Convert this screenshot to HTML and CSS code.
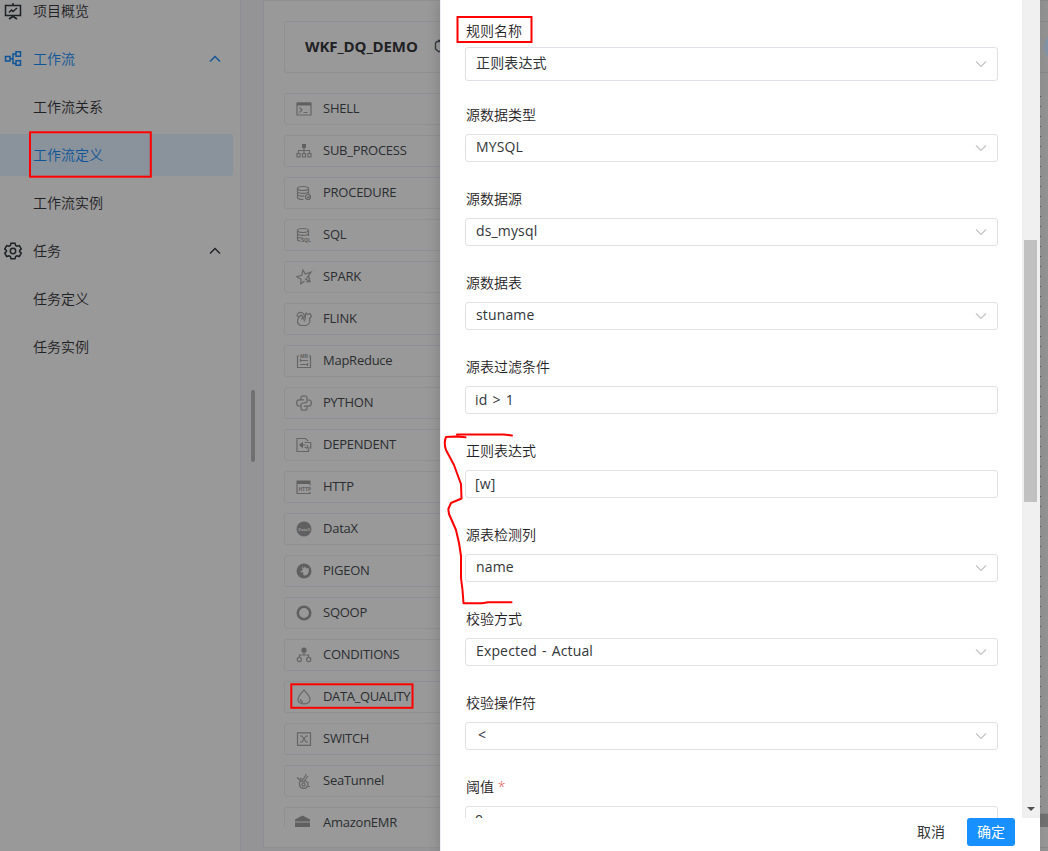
FILE: index.html
```html
<!DOCTYPE html>
<html lang="zh-CN">
<head>
<meta charset="utf-8">
<title>WKF_DQ_DEMO</title>
<link rel="stylesheet" href="styles.css">
</head>
<body>
<div class="app">
  <nav class="sidebar">
    <div class="menu-item">
      <svg class="menu-icon" viewBox="0 0 18 18"><path d="M1.500 3.500h15v10h-15zM9 1v2.500M9 13.500v2M5 17l4-2.500 4 2.500M5 10.500l2.500-2.500 1.500 1.500 4-3.500"/></svg>
      <span>项目概览</span>
    </div>
    <div class="menu-item active">
      <svg class="menu-icon" viewBox="0 0 18 18"><path d="M1.500 6.500h4.500v4.500H1.500zM6 8.800h3M12 4H9v9.500h3M12 1.800h4.500v4.500H12zM12 10.800h4.500v4.500H12z"/></svg>
      <span>工作流</span>
      <svg class="caret" viewBox="0 0 12 12"><path d="M1 8.500l5-5 5 5"/></svg>
    </div>
    <div class="menu-item child">工作流关系</div>
    <div class="menu-item child active selected">工作流定义</div>
    <div class="menu-item child">工作流实例</div>
    <div class="menu-item">
      <svg class="menu-icon" viewBox="0 0 18 18"><path d="M7 1.200h4l.6 2.300 1.400.8 2.300-.7 2 3.400-1.700 1.300v1.400l1.700 1.400-2 3.400-2.300-.7-1.400.8-.6 2.200H7l-.6-2.200-1.400-.8-2.300.7-2-3.400 1.700-1.400V8.300L.7 7l2-3.400 2.300.7 1.400-.8z"/><circle cx="9" cy="9" r="2.700"/></svg>
      <span>任务</span>
      <svg class="caret" viewBox="0 0 12 12"><path d="M1 8.500l5-5 5 5"/></svg>
    </div>
    <div class="menu-item child">任务定义</div>
    <div class="menu-item child">任务实例</div>
  </nav>
  <div class="gutter"><div class="grip"></div></div>
  <main class="panel">
    <header class="title-card"><h1>WKF_DQ_DEMO</h1>
      <svg class="copy-icon" viewBox="0 0 14 14"><path d="M4 1.500h8.500v9M3 2.500h6.500v10h-5L1.500 10V4z"/></svg>
    </header>
    <div class="task-list">
      <div class="task"><svg viewBox="0 0 16 16"><path d="M1 2h14v12H1zM3.500 6.500L6 9l-2.500 2.500M7.500 11.500h4"/><path class="solid" d="M1 1.500h14v3H1z"/></svg><span>SHELL</span></div>
      <div class="task"><svg viewBox="0 0 16 16"><path class="solid" d="M6 1h4v4H6z"/><path d="M8 5v5M2.500 10V7.500h11V10M1 10.500h3v3.500H1zM6.500 10.500h3v3.500h-3zM12 10.500h3v3.500h-3z"/></svg><span>SUB_PROCESS</span></div>
      <div class="task"><svg viewBox="0 0 16 16"><ellipse cx="7" cy="3.500" rx="5.500" ry="2"/><path d="M1.500 3.500v9c0 1.200 3 2 6 2M12.500 3.500V9M1.500 6.500c0 2.500 11 2.500 11 0M1.500 9.500c0 1.500 4 2 7 1.500"/><circle cx="12" cy="12" r="2.500"/><path d="M11 12l1 1 2-2"/></svg><span>PROCEDURE</span></div>
      <div class="task"><svg viewBox="0 0 16 16"><ellipse cx="7" cy="3.500" rx="5.500" ry="2"/><path d="M1.500 3.500v9c0 1 1 1.500 3 1.500M12.500 3.500V9M1.500 6.500c0 2.500 11 2.500 11 0M1.500 9.500c0 1 2 1.500 5 1.500"/><text x="5.200" y="14.500">SQL</text></svg><span>SQL</span></div>
      <div class="task"><svg viewBox="0 0 16 16"><path d="M10.500 9.500L15 3.200 9.300 5 7 1 5.800 6.200.8 7.700 5 10.300 4.800 14.800 8.500 12M12.500 6.500L14 12.500 9 9.800M10 12.800l4-.3"/></svg><span>SPARK</span></div>
      <div class="task"><svg viewBox="0 0 16 16"><path d="M5.500 8.500c1.500-2 1-4-.5-4.500L3 6 1 5C1 2.500 3 1 5.500 1.500 8.500 2 9 5 7 8.500M3 6.500C.5 9 1 13.500 5 14.500h5c3-1 4.500-4 3.500-7l2-2-1.500-3-2.500 1-1.500-1.500C8.500 4 10.500 7 8 10.500"/></svg><span>FLINK</span></div>
      <div class="task"><svg viewBox="0 0 16 16"><path d="M3 3H1.500v11.500h13V3H13M4 7.500h8M4 11.500h8M4.500 6v3M11.500 10v3"/><text x="4" y="5">MR</text></svg><span>MapReduce</span></div>
      <div class="task"><svg viewBox="0 0 16 16"><path d="M8 4.800H3C-.2 5-.2 11 3 11h2V9.500C5 7 11 9 11 6.500V2.500C11 .2 5 .2 5 2.500v2.300M8 11.200h5c3.200-.2 3.200-6.200 0-6.200h-2M5 10v3.500c0 2.300 6 2.300 6 0v-2.300"/></svg><span>PYTHON</span></div>
      <div class="task"><svg viewBox="0 0 16 16"><path d="M12 4L9.500 1.500H1v13h11.500V12M6 8h4M8.500 5.500h6.200v5.500H10M8.500 10.500h3V8"/><path class="solid" d="M3 8l4-3.200v6.400z"/></svg><span>DEPENDENT</span></div>
      <div class="task"><svg viewBox="0 0 16 16"><path class="solid" d="M.5 1.500h14v3.500H.5z"/><path d="M1 5v9.500h13V13M14 5v1.500"/><text x="2.500" y="11.500">HTTP</text></svg><span>HTTP</span></div>
      <div class="task"><svg viewBox="0 0 16 16"><circle class="solid" cx="8" cy="8" r="7.500"/><text class="knockout" x="2.200" y="9.600">DataX</text></svg><span>DataX</span></div>
      <div class="task"><svg viewBox="0 0 16 16"><circle class="solid" cx="8" cy="8" r="7.500"/><path class="cutout" d="M6 2.500l1.500 3 1.500-2 1.500 2 2-.5c1 4-.5 7-3.500 7.500-2 0-2-1.500-1.500-3L3.500 9l3-1.500z"/></svg><span>PIGEON</span></div>
      <div class="task"><svg viewBox="0 0 16 16"><circle class="ring" cx="8" cy="8" r="6.200"/></svg><span>SQOOP</span></div>
      <div class="task"><svg viewBox="0 0 16 16"><circle class="solid" cx="8" cy="3.200" r="2.600"/><path d="M8 5.500V8M3.500 10.500V8h9v2.500"/><circle cx="3.300" cy="12.500" r="2.100"/><circle cx="12.700" cy="12.500" r="2.100"/></svg><span>CONDITIONS</span></div>
      <div class="task quality"><svg viewBox="0 0 16 16"><path d="M8 1C6 3.500 2 7 2 10.200c0 6.300 12 6.300 12 0C14 7 10 3.500 8 1zM4.500 10c0 2 1 3 2.500 3.200"/></svg><span>DATA_QUALITY</span></div>
      <div class="task"><svg viewBox="0 0 16 16"><path d="M1.500 1.800h13v12.500h-13zM4 5h2l4 6h2M4 11h2l4-6h2"/></svg><span>SWITCH</span></div>
      <div class="task"><svg viewBox="0 0 16 16"><path d="M3.500 9C2 17.500 13 17.500 12 9.500L9.500 8 5 8.500zM1 4.500l4 3.500M4 5l3 2.500M10.500 1L7 6.500M12 3L8.500 7.500M12 13.500h2"/><circle cx="7.500" cy="11.500" r="1.600"/></svg><span>SeaTunnel</span></div>
      <div class="task"><svg viewBox="0 0 16 16"><path class="solid" d="M-1 4.500L6.500.5 14 4.500v2H-1zM-1 7.500h15v6.500H-1z"/></svg><span>AmazonEMR</span></div>
    </div>
  </main>
</div>

<div class="backdrop-edge">
  <div class="edge-head"><div class="edge-toolbar"><div class="edge-button"></div></div></div>
  <div class="edge-canvas"></div>
  <div class="edge-scroll"></div>
  <div class="edge-foot"></div>
</div>

<section class="drawer">
  <div class="drawer-body">
    <form class="fields">
      <div class="field tall"><label>规则名称</label><div class="control select">正则表达式<svg viewBox="0 0 12 12"><path d="M1 3.500l5 5 5-5"/></svg></div></div>
      <div class="field"><label>源数据类型</label><div class="control select">MYSQL<svg viewBox="0 0 12 12"><path d="M1 3.500l5 5 5-5"/></svg></div></div>
      <div class="field"><label>源数据源</label><div class="control select">ds_mysql<svg viewBox="0 0 12 12"><path d="M1 3.500l5 5 5-5"/></svg></div></div>
      <div class="field"><label>源数据表</label><div class="control select">stuname<svg viewBox="0 0 12 12"><path d="M1 3.500l5 5 5-5"/></svg></div></div>
      <div class="field"><label>源表过滤条件</label><div class="control">id &gt; 1</div></div>
      <div class="field"><label>正则表达式</label><div class="control">[w]</div></div>
      <div class="field"><label>源表检测列</label><div class="control select">name<svg viewBox="0 0 12 12"><path d="M1 3.500l5 5 5-5"/></svg></div></div>
      <div class="field"><label>校验方式</label><div class="control select">Expected - Actual<svg viewBox="0 0 12 12"><path d="M1 3.500l5 5 5-5"/></svg></div></div>
      <div class="field"><label>校验操作符</label><div class="control select operator">&lt;<svg viewBox="0 0 12 12"><path d="M1 3.500l5 5 5-5"/></svg></div></div>
      <div class="field"><label>阈值 <span class="required">*</span></label><div class="control">0</div></div>
    </form>
    <div class="scrollbar"><div class="thumb"></div><div class="arrow"></div></div>
  </div>
  <footer class="actions"><button class="cancel">取消</button><button class="confirm">确定</button></footer>
</section>

<svg class="marks" viewBox="0 0 1048 851">
  <rect x="30" y="132.300" width="120.800" height="44.400"/>
  <rect x="457.500" y="17" width="74" height="25"/>
  <rect x="291.300" y="684.300" width="121.200" height="23.500"/>
  <path d="M512 435.500L504 434.500H457M465.500 437.300L456 436.500 446 437Q443.500 443 446 450L454 465 458 476 461 484 461.500 498.500 451 503 448.300 509 449 514 456 530 459 543 461 556V578L462.500 590 463.500 603.300H482L488 602.300H511.500"/>
</svg>
</body>
</html>
```
FILE: styles.css
```css
* { box-sizing: border-box; }
body {
  position: relative;
  width: 1048px;
  height: 851px;
  margin: 0;
  overflow: hidden;
  background: #949497;
  font: 14px/22px "Open Sans", "Noto Sans CJK SC", sans-serif;
}
.app { display: flex; height: 851px; }

/* Side menu */
.sidebar {
  width: 241px;
  flex: none;
  padding-top: 0;
  margin-top: -10px;
  background: #999;
  border-right: 1px solid #8f8f93;
  color: #1f2225;
}
.menu-item {
  display: flex;
  align-items: center;
  width: 233px;
  height: 42px;
  margin-bottom: 6px;
  padding: 0 12px 0 4px;
  border-radius: 0 3px 3px 0;
  font-weight: 350;
}
.menu-icon { width: 18px; height: 18px; margin-right: 11px; fill: none; stroke: currentColor; stroke-width: 1.5; }
.caret { width: 12px; height: 12px; margin-left: auto; fill: none; stroke: currentColor; stroke-width: 1.4; }
.menu-item.child { padding-left: 33px; }
.menu-item.active { color: #0f5599; }
.menu-item.selected { background: #8a929b; }

/* Divider with its drag handle */
.gutter { width: 22px; flex: none; padding: 390px 0 0 10px; }
.grip { width: 4px; height: 72px; border-radius: 2px; background: #707070; }

/* Workflow panel */
.panel {
  flex: 1;
  height: 848px;
  padding: 20px;
  border: 1px solid #8f8f93;
  background: #999;
}
.title-card {
  display: flex;
  align-items: center;
  height: 52px;
  padding: 0 0 2px 20px;
  border: 1px solid #8f8f93;
  border-radius: 3px;
  color: #1f2225;
}
.title-card h1 { width: 129px; margin: 0; font-size: 15px; line-height: 22px; font-weight: 700; letter-spacing: -.08px; }
.copy-icon { width: 14px; height: 14px; fill: none; stroke: #333639; stroke-width: 1.300; }
.task-list { height: 734px; margin-top: 20px; overflow: hidden; }
.task {
  display: flex;
  align-items: center;
  height: 32px;
  margin-bottom: 10px;
  padding-left: 11px;
  border: 1px solid #8f8f93;
  border-radius: 3px;
  color: #2b2e31;
  font-size: 13px;
  letter-spacing: -.25px;
}
.task.quality { letter-spacing: -.35px; }
.task span { padding-bottom: 2px; line-height: 18px; }
.task svg { width: 16px; height: 16px; margin-right: 11px; overflow: visible; fill: none; stroke: #666; stroke-width: 1.200; }
.task svg text { fill: #606060; stroke: none; font: 700 5px "Open Sans", sans-serif; letter-spacing: 0; }
.task svg .solid { fill: #606060; stroke: none; }
.task svg .cutout { fill: #999; stroke: none; }
.task svg .knockout { fill: #999; font-size: 4px; }
.task svg .ring { stroke: #606060; stroke-width: 2.600; }

/* Strip of the dimmed page to the right of the drawer */
.backdrop-edge { position: absolute; top: 0; left: 1040px; width: 8px; height: 851px; background: #929292; overflow: hidden; }
.edge-head { height: 91px; padding-top: 20px; border-top: 1px solid #88888b; }
.edge-toolbar { height: 52px; padding: 9px 0 0 4px; border-top: 1px solid #88888b; border-bottom: 1px solid #88888b; }
.edge-button { width: 32px; height: 32px; border-radius: 50%; background: #8292a5; }
.edge-canvas { height: 722px; background: radial-gradient(circle at 0.500px 5.500px, #555 .6px, transparent .9px) 0 0 / 10px 10px; }
.edge-scroll { height: 14px; border-top: 1px solid #888; background: #707070; }
.edge-foot { height: 21px; border-bottom: 1px solid #88888b; background: #969696; }

/* Drawer */
.drawer {
  position: absolute;
  top: 0;
  left: 440px;
  width: 600px;
  height: 851px;
  background: #fff;
  border-left: 1px solid #efeff5;
  box-shadow: -3px 0 10px rgba(0, 0, 0, .12);
}
.drawer-body { display: flex; height: 818px; overflow: hidden; }
.fields { width: 581px; padding: 18px 24px 0; color: #333639; }
.field { height: 84px; }
.field label { display: block; height: 32px; padding-left: 1px; line-height: 26px; color: #1f2225; font-weight: 350; }
.control {
  display: flex;
  align-items: center;
  width: 533px;
  height: 28px;
  padding: 0 10px 0 9px;
  border: 1px solid #e0e0e6;
  border-radius: 3px;
  letter-spacing: .15px;
  word-spacing: 1.300px;
}
.control.select { padding: 0 10px 2px; }
.control.operator { padding-left: 12px; }
.control svg { width: 12px; height: 12px; margin: 2px 0 0 auto; fill: none; stroke: #c2c2c2; stroke-width: 1.100; }
.tall label { height: 29px; }
.tall .control { height: 34px; }
.required { color: #f05050; }
.scrollbar { width: 18px; padding: 240px 3px 0 2px; background: #f0f0f0; }
.thumb { height: 262px; background: #c1c1c1; }
.arrow { width: 0; margin: 305px 0 0 2.500px; border: 4px solid transparent; border-top-color: #505050; border-bottom: 0; }
.actions { display: flex; justify-content: flex-end; padding-right: 25px; }
.actions button { height: 28px; padding: 0; border: 0; border-radius: 3px; font: inherit; }
.cancel { width: 44px; margin-right: 14px; background: none; color: #333639; }
.actions .confirm { width: 48px; background: #1890ff; color: #fff; }

/* Red review marks */
.marks { position: absolute; inset: 0; width: 1048px; height: 851px; fill: none; stroke: #f00; stroke-width: 2; pointer-events: none; }
.marks path { stroke-linecap: round; stroke-linejoin: round; }
```
